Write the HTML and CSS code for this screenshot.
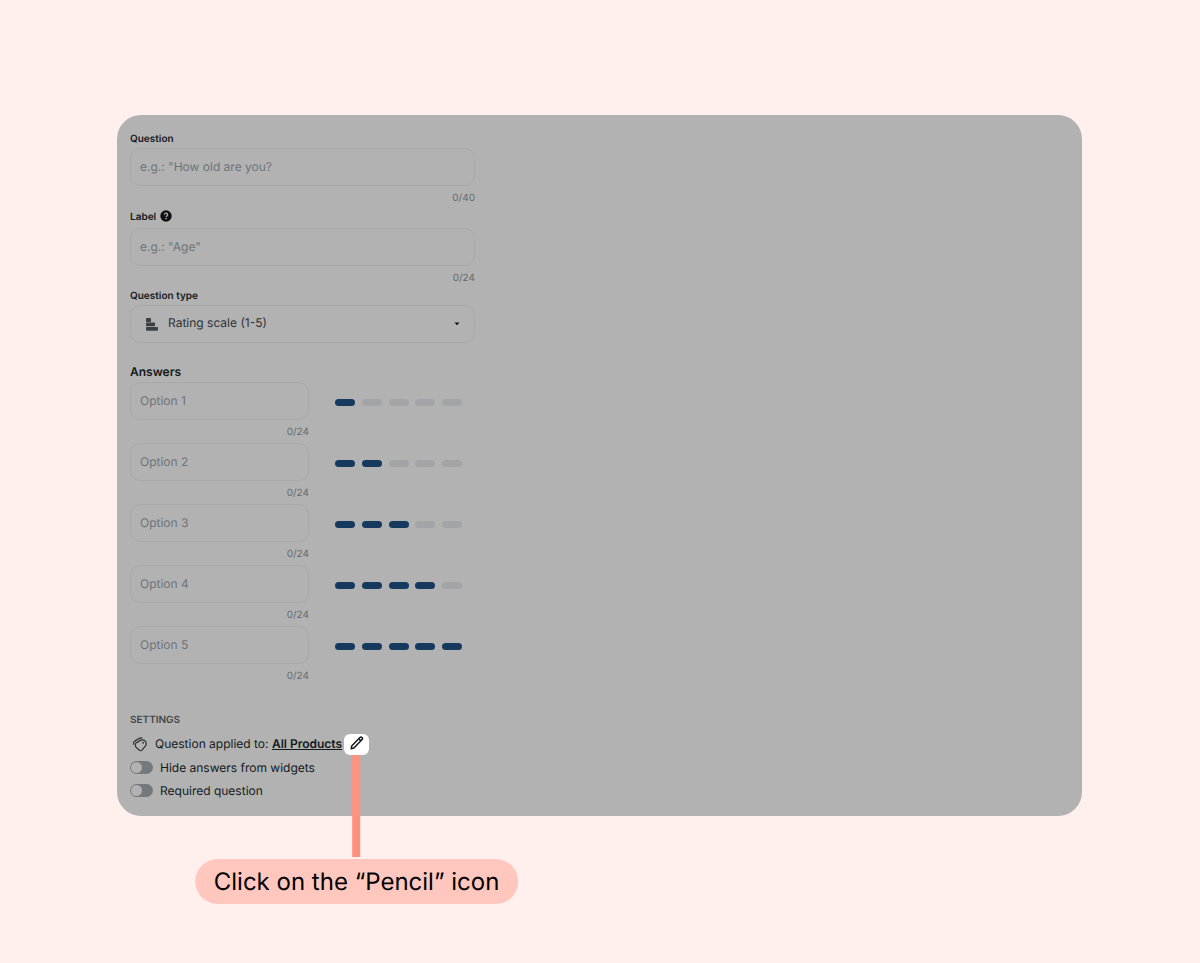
FILE: index.html
```html
<!DOCTYPE html>
<html lang="en">
<head>
  <meta charset="UTF-8">
  <meta name="viewport" content="width=device-width, initial-scale=1.0">
  <title>Edit question</title>
  <link rel="stylesheet" href="styles.css">
</head>
<body>
  <main class="panel">
    <form class="question-form">
      <div class="field">
        <label for="question">Question</label>
        <input class="text-input" type="text" id="question" placeholder="e.g.: &quot;How old are you?">
        <span class="counter">0/40</span>
      </div>

      <div class="field">
        <div class="label-row">
          <label for="label">Label</label>
          <svg class="help-icon" viewBox="0 0 12 12">
            <circle cx="6" cy="6" r="5.7" fill="#0d1114"/>
            <path d="M4.4 4.8C4.4 3.8 5.1 3.2 6 3.2s1.7.6 1.7 1.5C7.7 5.7 6.2 5.8 6.2 7" fill="none" stroke="#b2b2b2" stroke-width="1.2"/>
            <circle cx="6.1" cy="8.6" r=".8" fill="#b2b2b2"/>
          </svg>
        </div>
        <input class="text-input" type="text" id="label" placeholder="e.g.: &quot;Age&quot;">
        <span class="counter">0/24</span>
      </div>

      <div class="field">
        <label for="type">Question type</label>
        <div class="select-wrap">
          <select id="type">
            <option>Rating scale (1-5)</option>
          </select>
          <svg class="type-icon" viewBox="0 0 12 13">
            <path d="M.8 0h3.4q.8 0 .8.8v2.4q0 .8-.8.8H.8Q0 4 0 3.2V.8Q0 0 .8 0zM.8 4.500h7.400q.8 0 .8.8v2.200q0 .8-.8.8H.8q-.8 0-.8-.8V5.300q0-.8.8-.8zM.8 9h10.400q.8 0 .8.8v2.200q0 .8-.8.8H.8q-.8 0-.8-.8V9.800Q0 9 .8 9z" fill="#3a4147"/>
          </svg>
          <svg class="caret-icon" viewBox="0 0 6 4">
            <path d="M.5.5h5L3 3.300z" fill="#0d1114"/>
          </svg>
        </div>
      </div>

      <h2>Answers</h2>
      <div class="answer">
        <div class="answer-text">
          <input class="text-input" type="text" placeholder="Option 1" aria-label="Option 1">
          <span class="counter">0/24</span>
        </div>
        <div class="scale"><i class="on"></i><i></i><i></i><i></i><i></i></div>
      </div>
      <div class="answer">
        <div class="answer-text">
          <input class="text-input" type="text" placeholder="Option 2" aria-label="Option 2">
          <span class="counter">0/24</span>
        </div>
        <div class="scale"><i class="on"></i><i class="on"></i><i></i><i></i><i></i></div>
      </div>
      <div class="answer">
        <div class="answer-text">
          <input class="text-input" type="text" placeholder="Option 3" aria-label="Option 3">
          <span class="counter">0/24</span>
        </div>
        <div class="scale"><i class="on"></i><i class="on"></i><i class="on"></i><i></i><i></i></div>
      </div>
      <div class="answer">
        <div class="answer-text">
          <input class="text-input" type="text" placeholder="Option 4" aria-label="Option 4">
          <span class="counter">0/24</span>
        </div>
        <div class="scale"><i class="on"></i><i class="on"></i><i class="on"></i><i class="on"></i><i></i></div>
      </div>
      <div class="answer">
        <div class="answer-text">
          <input class="text-input" type="text" placeholder="Option 5" aria-label="Option 5">
          <span class="counter">0/24</span>
        </div>
        <div class="scale"><i class="on"></i><i class="on"></i><i class="on"></i><i class="on"></i><i class="on"></i></div>
      </div>

      <h3>SETTINGS</h3>
      <div class="applied">
        <svg class="tag-icon" viewBox="0 0 16 16">
          <g fill="none" stroke="#30373c" stroke-width="1.300" stroke-linecap="round" stroke-linejoin="round">
            <path d="M4.900 6.300 9 4.200q1-.5 2-.3l1.300.4q1.400.5 1.600 2l.2 1.600q.1 1.100-.6 2l-3.300 4q-1.200 1.300-2.600.3L4.500 11.800q-1.200-1-1.100-2.500v-1q.1-1.400 1.500-2z"/>
            <path d="M1.400 8.200q-.1-2.400 2-3.600l4-2.200q1-.5 2.200-.4"/>
            <path d="M11.200 6.300v.9"/>
          </g>
        </svg>
        <span>Question applied to: <a href="#">All Products</a></span>
        <div class="edit">
          <button type="button" class="edit-btn" aria-label="Edit products">
            <svg viewBox="0 0 14 14">
              <g fill="none" stroke="#14191c" stroke-width="1.500" stroke-linejoin="round">
                <path d="M1.200 12.800 1.700 10 9.900 1.600q1.100-1 2.100-.1t.1 2.100L3.900 12.100z"/>
                <path d="M8.700 2.800 10.900 4.900"/>
              </g>
            </svg>
          </button>
          <div class="hint">
            <span class="hint-line"></span>
            <span class="hint-text">Click on the “Pencil” icon</span>
          </div>
        </div>
      </div>
      <label class="toggle"><input type="checkbox"> Hide answers from widgets</label>
      <label class="toggle"><input type="checkbox"> Required question</label>
    </form>
  </main>
</body>
</html>
```
FILE: styles.css
```css
* {
  box-sizing: border-box;
}
body {
  margin: 0;
  padding: 115px 118px 115px 117px;
  background-color: #fff0ed;
  color: #14191c;
  font-family: Inter, "Liberation Sans", sans-serif;
  font-size: 12px;
  text-rendering: geometricPrecision;
}
.panel {
  padding: 15px 13px 14px;
  background-color: #b2b2b2;
  border-radius: 24px;
}
.question-form {
  max-width: 345px;
}

/* Fields */
.field {
  display: flex;
  flex-direction: column;
  margin-bottom: 1px;
}
.field label {
  font-size: 10px;
  font-weight: 600;
  line-height: 18px;
}
.label-row {
  display: flex;
  align-items: center;
  gap: 4px;
  height: 19px;
  margin-bottom: 2px;
}
.help-icon {
  width: 12px;
  height: 12px;
  margin-bottom: 2px;
}
.text-input,
select {
  width: 100%;
  height: 38px;
  padding: 0 9px 1px;
  border: 1px solid #a8a9aa;
  border-radius: 10px;
  background: transparent;
  color: #2b3136;
  font-family: inherit;
  font-size: 12px;
  text-rendering: inherit;
}
.text-input::placeholder {
  color: #6e7478;
}
.counter {
  margin-top: 5px;
  color: #666a6e;
  font-size: 10px;
  line-height: 15px;
  text-align: right;
}
.select-wrap {
  position: relative;
}
select {
  display: block;
  appearance: none;
  padding: 0 37px 3px;
}
.type-icon {
  position: absolute;
  top: 13px;
  left: 16px;
  width: 12px;
  height: 13px;
}
.caret-icon {
  position: absolute;
  top: 17px;
  right: 15px;
  width: 6px;
  height: 4px;
}

/* Answers */
h2 {
  margin: 19px 0 0;
  font-size: 12px;
  font-weight: 600;
  line-height: 20px;
}
.answer {
  display: flex;
  gap: 26px;
  margin-bottom: 3px;
}
.answer-text {
  display: flex;
  flex-direction: column;
  width: 179px;
}
.scale {
  display: flex;
  justify-content: space-between;
  width: 127px;
  padding-top: 17px;
}
.scale i {
  width: 20px;
  height: 7px;
  border-radius: 4px;
  background-color: #a3a4a8;
}
.scale .on {
  background-color: #163a5e;
}

/* Settings */
h3 {
  margin: 28px 0 4px;
  color: #41474b;
  font-size: 10px;
  font-weight: 600;
  line-height: 16px;
}
.applied {
  display: flex;
  align-items: center;
  height: 23px;
  margin-bottom: 1px;
}
.applied span {
  line-height: 20px;
}
.tag-icon {
  width: 16px;
  height: 16px;
  margin: 0 7px 0 2px;
}
.applied a {
  color: inherit;
  font-weight: 600;
}
.edit {
  position: relative;
  align-self: flex-end;
  margin-left: 2px;
}
.edit-btn {
  display: flex;
  align-items: center;
  justify-content: center;
  width: 25px;
  height: 21px;
  padding: 0 0 3px;
  border: none;
  border-radius: 6px;
  background-color: #fff;
  cursor: pointer;
}
.edit-btn svg {
  width: 14px;
  height: 14px;
}
.toggle {
  display: flex;
  align-items: center;
  gap: 7px;
  height: 23px;
}
.toggle input {
  display: flex;
  appearance: none;
  width: 23px;
  height: 13px;
  margin: 0;
  padding: 1px;
  border-radius: 7px;
  background-color: #74797e;
}
.toggle input::before {
  content: "";
  width: 11px;
  height: 11px;
  border-radius: 50%;
  background-color: #b2b2b2;
}

/* Hint hanging below the pencil */
.hint {
  position: absolute;
  top: 100%;
  left: 50%;
  display: flex;
  flex-direction: column;
  align-items: center;
  gap: 2px;
  transform: translateX(-50%);
}
.hint-line {
  width: 8px;
  height: 102px;
  background-color: #ff927f;
}
.hint .hint-text {
  padding: 0 19px;
  border-radius: 23px;
  background-color: #ffc7be;
  color: #000;
  font-size: 24px;
  line-height: 45px;
  white-space: nowrap;
}
```
